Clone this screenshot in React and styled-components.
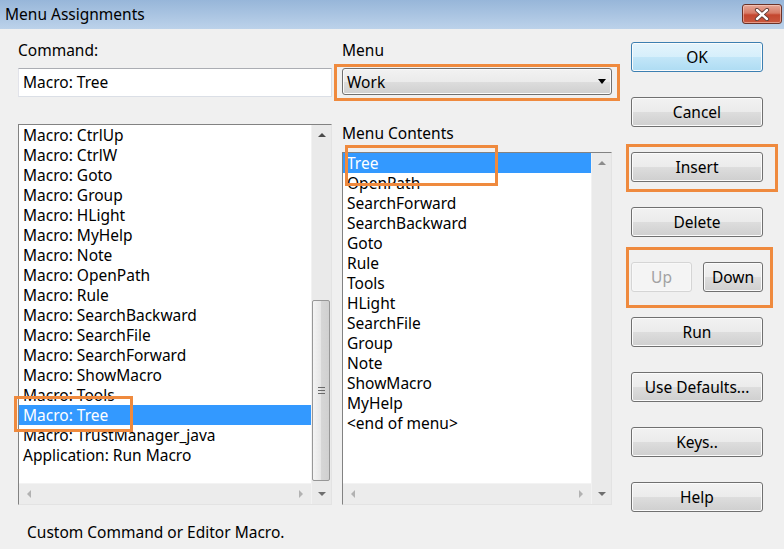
import React from 'react';
import styled, { createGlobalStyle } from 'styled-components';

const Global = createGlobalStyle`
  html, body { margin: 0; padding: 0; background: #f0f0f0; }
  body { font-family: "Noto Sans", "Open Sans", sans-serif; font-size: 15.5px; color: #000; }
  * { box-sizing: border-box; }
`;

const Window = styled.div`
  width: 784px;
  height: 549px;
  display: flex;
  flex-direction: column;
  background: #f0f0f0;
  overflow: hidden;
`;

const TitleBar = styled.div`
  height: 29px;
  flex: none;
  display: flex;
  align-items: flex-start;
  justify-content: space-between;
  padding: 0 2px 0 5px;
  background: linear-gradient(#97b6d9, #bcd2ea);
`;

const Title = styled.div`
  line-height: 28px;
  font-size: 15.5px;
  color: #000;
`;

const CloseButton = styled.div`
  margin-top: 4px;
  width: 40px;
  height: 20px;
  border: 1px solid #6b3328;
  border-radius: 3px;
  display: flex;
  align-items: center;
  justify-content: center;
  background: linear-gradient(#e6a898 0%, #d77b66 45%, #c4472f 55%, #c9573e 100%);
  box-shadow: inset 0 0 0 1px rgba(255, 220, 210, 0.5);
`;

const Body = styled.div`
  flex: 1;
  display: flex;
  padding-left: 18px;
`;

const Column = styled.div`
  display: flex;
  flex-direction: column;
  width: ${p => p.$w}px;
  margin-left: ${p => p.$ml || 0}px;
`;

const Label = styled.div`
  line-height: 20px;
  height: 20px;
  margin-top: ${p => p.$mt}px;
  white-space: nowrap;
`;

const TextInput = styled.div`
  margin-top: 8px;
  height: 29px;
  border: 1px solid #dbdfe6;
  border-top-color: #abadb3;
  border-left-color: #e2e3ea;
  background: #fff;
  padding-left: 4px;
  line-height: 27px;
`;

const ComboWrap = styled.div`
  position: relative;
  margin-top: 8px;
  height: 27px;
`;

const Combo = styled.div`
  height: 27px;
  border: 1px solid #707070;
  border-radius: 3px;
  display: flex;
  align-items: center;
  justify-content: space-between;
  padding: 0 4px 0 4px;
  background: linear-gradient(#f2f2f2 0%, #ebebeb 50%, #dddddd 51%, #cfcfcf 100%);
  box-shadow: inset 0 0 0 1px #fbfbfb;
`;

const DropArrow = styled.span`
  width: 0;
  height: 0;
  margin-right: 1px;
  border-left: 4px solid transparent;
  border-right: 4px solid transparent;
  border-top: 5px solid #000;
`;

const ListBox = styled.div`
  position: relative;
  margin-top: ${p => p.$mt}px;
  height: ${p => p.$h}px;
  border: 1px solid #e3e3e3;
  border-top-color: #828282;
  border-left-color: #828282;
  background: #fff;
  display: grid;
  grid-template-columns: 1fr 20px;
  grid-template-rows: 1fr 21px;
`;

const Items = styled.div`
  overflow: hidden;
`;

const Item = styled.div`
  height: 20px;
  line-height: 20px;
  padding-left: 4px;
  white-space: nowrap;
  background: ${p => (p.$sel ? '#3399ff' : 'transparent')};
  color: ${p => (p.$sel ? '#fff' : '#000')};
`;

const VScroll = styled.div`
  grid-column: 2;
  grid-row: 1 / span 2;
  display: flex;
  flex-direction: column;
  background: #eaeaea;
  border-left: 1px solid #f2f2f2;
`;

const HScroll = styled.div`
  grid-column: 1;
  grid-row: 2;
  display: flex;
  align-items: center;
  justify-content: space-between;
  background: #ececec;
  border-top: 1px solid #f3f3f3;
`;

const ArrowCell = styled.div`
  flex: none;
  width: ${p => p.$w || 19}px;
  height: ${p => p.$h || 20}px;
  display: flex;
  align-items: center;
  justify-content: center;
`;

const Tri = styled.span`
  width: 0;
  height: 0;
  ${p =>
    p.$dir === 'up'
      ? `border-left: 4px solid transparent; border-right: 4px solid transparent; border-bottom: 4px solid ${p.$c};`
      : p.$dir === 'down'
      ? `border-left: 4px solid transparent; border-right: 4px solid transparent; border-top: 4px solid ${p.$c};`
      : p.$dir === 'left'
      ? `border-top: 4px solid transparent; border-bottom: 4px solid transparent; border-right: 4px solid ${p.$c};`
      : `border-top: 4px solid transparent; border-bottom: 4px solid transparent; border-left: 4px solid ${p.$c};`}
`;

const Track = styled.div`
  flex: 1;
  display: flex;
  flex-direction: column;
  justify-content: flex-end;
  padding: 0 1px 2px 0;
`;

const Thumb = styled.div`
  height: ${p => p.$h}px;
  border: 1px solid #979797;
  border-radius: 2px;
  background: linear-gradient(to right, #f4f4f4 0%, #e6e6e6 50%, #d6d6d6 51%, #d0d0d0 100%);
  display: flex;
  flex-direction: column;
  align-items: center;
  justify-content: center;
  gap: 2px;
`;

const GripLine = styled.span`
  width: 7px;
  height: 1px;
  background: #6a6a6a;
`;

const Status = styled.div`
  margin-top: 17px;
  padding-left: 9px;
  line-height: 20px;
  white-space: nowrap;
`;

const ButtonStack = styled.div`
  display: flex;
  flex-direction: column;
  gap: 25px;
  padding-top: 13px;
`;

const Button = styled.button`
  width: ${p => p.$w || 132}px;
  height: 30px;
  padding: 0;
  border: 1px solid ${p => (p.$primary ? '#3c7fb1' : p.$off ? '#d5d5d5' : '#707070')};
  border-radius: 3px;
  font: 15.5px "Noto Sans", "Open Sans", sans-serif;
  color: ${p => (p.$off ? '#a2a2a2' : '#000')};
  background: ${p =>
    p.$primary
      ? 'linear-gradient(#e4f4fc 0%, #d6effb 50%, #c2e6f8 51%, #aedcf3 100%)'
      : p.$off
      ? '#f4f4f4'
      : 'linear-gradient(#f2f2f2 0%, #ebebeb 50%, #dddddd 51%, #cfcfcf 100%)'};
  box-shadow: inset 0 0 0 1px ${p => (p.$off ? '#f8f8f8' : '#fbfbfb')};
`;

const Spot = styled.div`
  position: relative;
  display: flex;
  gap: ${p => p.$gap || 0}px;
`;

const Mark = styled.div`
  position: absolute;
  pointer-events: none;
  border: 3px solid #ef8a3e;
  top: ${p => p.$t}px;
  left: ${p => p.$l}px;
  width: ${p => p.$w}px;
  height: ${p => p.$h}px;
`;

const leftItems = [
  'Macro: CtrlUp',
  'Macro: CtrlW',
  'Macro: Goto',
  'Macro: Group',
  'Macro: HLight',
  'Macro: MyHelp',
  'Macro: Note',
  'Macro: OpenPath',
  'Macro: Rule',
  'Macro: SearchBackward',
  'Macro: SearchFile',
  'Macro: SearchForward',
  'Macro: ShowMacro',
  'Macro: Tools',
  'Macro: Tree',
  'Macro: TrustManager_java',
  'Application: Run Macro',
];

const menuItems = [
  'Tree',
  'OpenPath',
  'SearchForward',
  'SearchBackward',
  'Goto',
  'Rule',
  'Tools',
  'HLight',
  'SearchFile',
  'Group',
  'Note',
  'ShowMacro',
  'MyHelp',
  '<end of menu>',
];

function List({ items, selected, mt, h, thumb, upColor, children }) {
  return (
    <ListBox $mt={mt} $h={h}>
      <Items>
        {items.map(t => (
          <Item key={t} $sel={t === selected}>{t}</Item>
        ))}
      </Items>
      <VScroll>
        <ArrowCell $w={19} $h={20}><Tri $dir="up" $c={upColor} /></ArrowCell>
        <Track>
          {thumb && (
            <Thumb $h={thumb}>
              <GripLine />
              <GripLine />
              <GripLine />
            </Thumb>
          )}
        </Track>
        <ArrowCell $w={19} $h={21}><Tri $dir="down" $c="#6e6e6e" /></ArrowCell>
      </VScroll>
      <HScroll>
        <ArrowCell $w={20} $h={20}><Tri $dir="left" $c="#b2b2b2" /></ArrowCell>
        <ArrowCell $w={20} $h={20}><Tri $dir="right" $c="#b2b2b2" /></ArrowCell>
      </HScroll>
      {children}
    </ListBox>
  );
}

export default function App() {
  return (
    <>
      <Global />
      <Window>
        <TitleBar>
          <Title>Menu Assignments</Title>
          <CloseButton>
            <svg width="16" height="13" viewBox="0 0 16 13">
              <path d="M3 2 L13 11 M13 2 L3 11" stroke="#5b3a33" strokeWidth="4.2" strokeLinecap="round" />
              <path d="M3 2 L13 11 M13 2 L3 11" stroke="#ffffff" strokeWidth="2.4" strokeLinecap="round" />
            </svg>
          </CloseButton>
        </TitleBar>
        <Body>
          <Column $w={314}>
            <Label $mt={11}>Command:</Label>
            <TextInput>Macro: Tree</TextInput>
            <List items={leftItems} selected="Macro: Tree" mt={27} h={381} thumb={181} upColor="#4a4a4a">
              <Mark $t={271} $l={-5} $w={119} $h={36} />
            </List>
            <Status>Custom Command or Editor Macro.</Status>
          </Column>
          <Column $w={270} $ml={10}>
            <Label $mt={11}>Menu</Label>
            <ComboWrap>
              <Combo>
                <span>Work</span>
                <DropArrow />
              </Combo>
              <Mark $t={-4} $l={-8} $w={286} $h={37} />
            </ComboWrap>
            <Label $mt={28}>Menu Contents</Label>
            <List items={menuItems} selected="Tree" mt={9} h={353} upColor="#8c8c8c">
              <Mark $t={-8} $l={2} $w={153} $h={41} />
            </List>
          </Column>
          <Column $w={132} $ml={19}>
            <ButtonStack>
              <Button $primary>OK</Button>
              <Button>Cancel</Button>
              <Spot>
                <Button>Insert</Button>
                <Mark $t={-8} $l={-5} $w={152} $h={48} />
              </Spot>
              <Button>Delete</Button>
              <Spot $gap={11}>
                <Button $w={61} $off>Up</Button>
                <Button $w={60}>Down</Button>
                <Mark $t={-15} $l={-5} $w={147} $h={61} />
              </Spot>
              <Button>Run</Button>
              <Button>Use Defaults...</Button>
              <Button>Keys..</Button>
              <Button>Help</Button>
            </ButtonStack>
          </Column>
        </Body>
      </Window>
    </>
  );
}
